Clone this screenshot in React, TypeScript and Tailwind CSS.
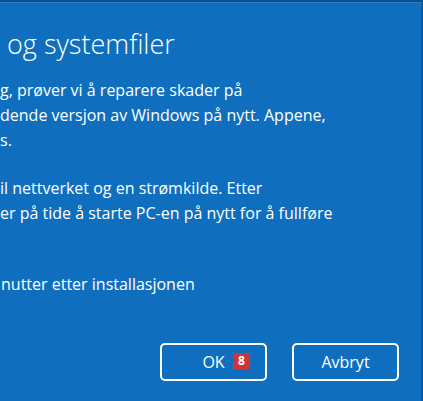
export default function App() {
  return (
    <div className="relative h-[401px] w-[423px] overflow-hidden bg-[#0f6fbe] font-['Open_Sans',sans-serif] text-white">
      {/* window frame edges */}
      <div className="h-[2px] w-full bg-[#0b4f8e]" />
      <div className="h-px w-full bg-[#2a80c6]" />
      <div className="absolute right-0 top-0 h-full w-[2px] bg-[#0b5aa0]" />

      <div className="flex h-[398px] flex-col pr-4">
        <h1 className="mt-[23px] whitespace-nowrap text-[27px] font-light leading-[36px]">
          &nbsp;og systemfiler
        </h1>

        <div className="mt-[16px] whitespace-nowrap text-[16px] leading-[25px]">
          <p>
            <span>g, prøver vi å reparere skader på</span>
            <br />
            <span>dende versjon av Windows på nytt. Appene,</span>
            <br />
            <span>s.</span>
          </p>
          <p className="mt-[23px]">
            <span>il nettverket og en strømkilde. Etter</span>
            <br />
            <span>er på tide å starte PC-en på nytt for å fullføre</span>
            <br />
            &nbsp;
          </p>
          <p className="mt-[21px] pl-px">nutter etter installasjonen</p>
        </div>

        <div className="mt-auto mb-[20px] flex justify-end gap-[25px] pr-[8px]">
          <button className="relative h-[38px] w-[107px] rounded-[5px] border-2 border-white text-[16px]">
            OK
            {/* keyboard shortcut badge */}
            <span className="absolute left-[71px] top-[8px] flex h-[16px] w-[17px] items-center justify-center bg-[#d13438] text-[12px] font-bold leading-none">
              8
            </span>
          </button>
          <button className="h-[38px] w-[107px] rounded-[5px] border-2 border-white text-[16px]">
            Avbryt
          </button>
        </div>
      </div>
    </div>
  );
}
